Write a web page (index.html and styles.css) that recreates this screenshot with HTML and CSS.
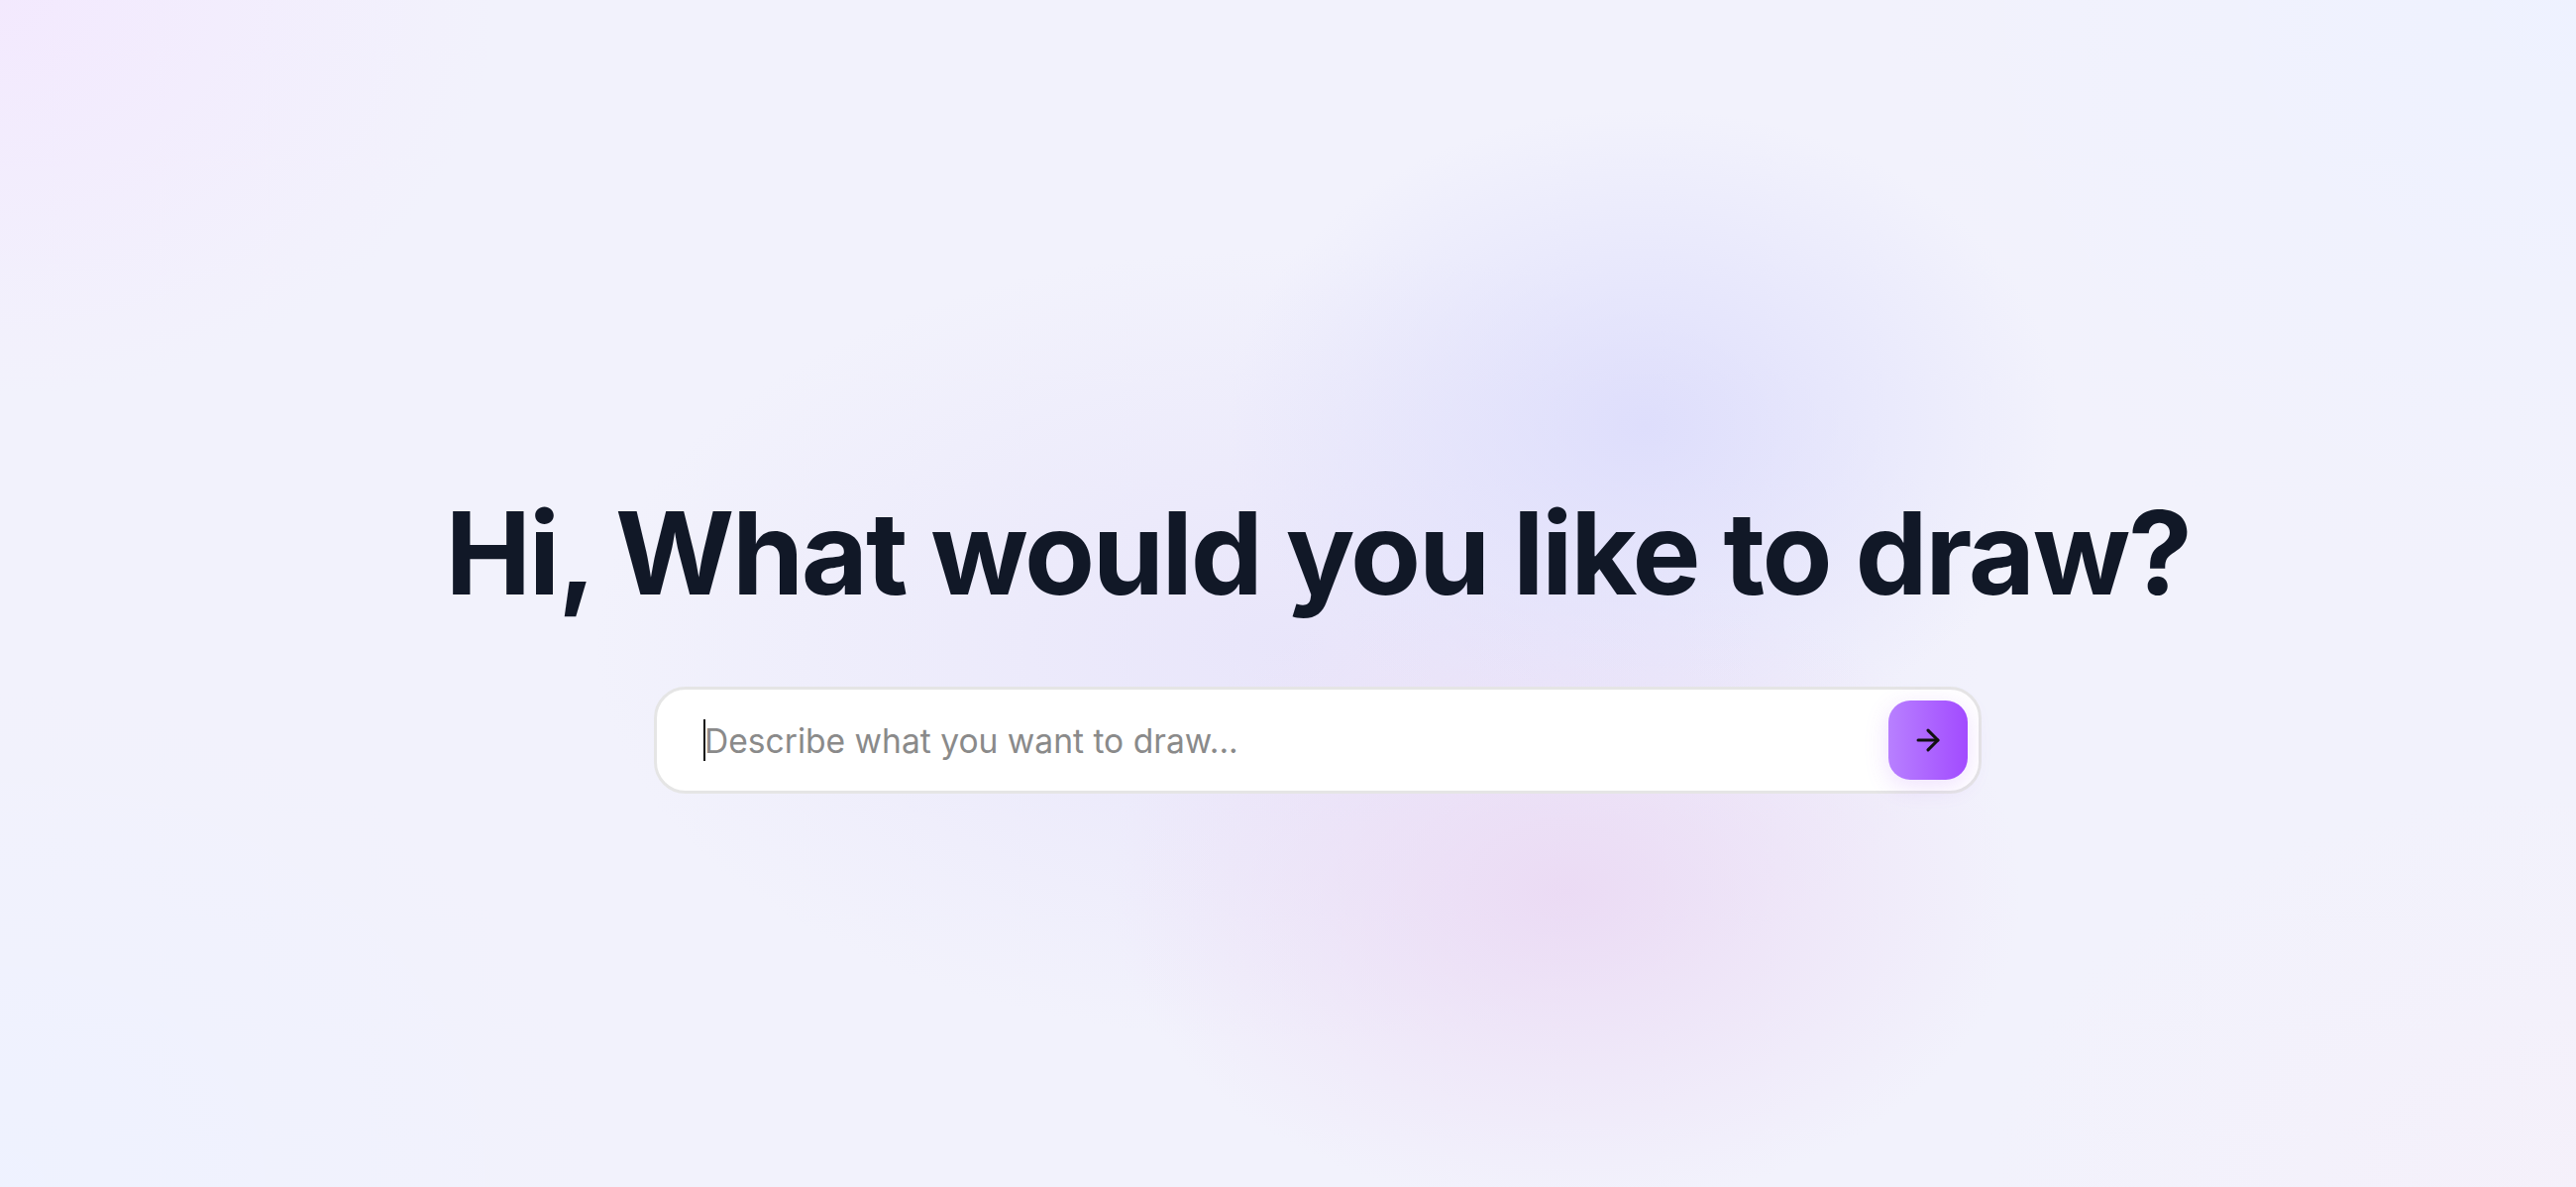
FILE: index.html
```html
<!DOCTYPE html>
<html lang="en">
<head>
<meta charset="utf-8">
<title>Draw</title>
<link rel="stylesheet" href="styles.css">
</head>
<body>
<main class="page">
  <h1 class="title">Hi, What would you like to draw?</h1>
  <form class="prompt">
    <div class="field">
      <span class="caret"></span>
      <input class="input" type="text" placeholder="Describe what you want to draw...">
    </div>
    <button class="send" type="button" aria-label="Send">
      <svg viewBox="0 0 24 24" width="34" height="34" fill="none" stroke="#111111" stroke-width="2.2" stroke-linecap="round" stroke-linejoin="round"><path d="M5 12h14"/><path d="m12 5 7 7-7 7"/></svg>
    </button>
  </form>
</main>
</body>
</html>
```
FILE: styles.css
```css
* { box-sizing: border-box; }
html, body { margin: 0; height: 100%; }
body {
  font-family: Inter, "Noto Sans", sans-serif;
  background-color: #f2f2fc;
  background-image:
    radial-gradient(ellipse 420px 320px at 1660px 430px, rgba(220,220,252,0.9), rgba(220,220,252,0) 100%),
    radial-gradient(ellipse 460px 320px at 1580px 900px, rgba(235,218,244,0.95), rgba(235,218,244,0) 100%),
    radial-gradient(ellipse 700px 400px at 1300px 650px, rgba(230,226,250,0.8), rgba(230,226,250,0) 100%),
    radial-gradient(ellipse 500px 400px at 0px 0px, rgba(243,232,254,0.9), rgba(243,232,254,0) 100%),
    radial-gradient(ellipse 700px 600px at 2600px 0px, rgba(238,242,255,0.95), rgba(238,242,255,0) 100%),
    radial-gradient(ellipse 600px 500px at 0px 1198px, rgba(238,242,255,0.9), rgba(238,242,255,0) 100%),
    radial-gradient(ellipse 600px 400px at 2600px 1198px, rgba(245,240,250,0.9), rgba(245,240,250,0) 100%);
  overflow: hidden;
}
.page {
  height: 100%;
  display: flex;
  flex-direction: column;
  align-items: center;
  padding-top: 500px;
  padding-left: 60px;
}
.title {
  margin: 0;
  font-size: 116px;
  line-height: 1;
  font-weight: 700;
  letter-spacing: -0.02em;
  color: #111827;
  white-space: nowrap;
}
.prompt {
  margin-top: 77px;
  width: 1340px;
  height: 108px;
  background: #ffffff;
  border: 3px solid #e5e5e5;
  border-radius: 32px;
  display: flex;
  align-items: center;
  padding: 0 11px 0 45px;
}
.field {
  position: relative;
  flex: 1;
  display: flex;
  align-items: center;
}
.caret {
  position: absolute;
  left: 2px;
  top: 50%;
  width: 2px;
  height: 42px;
  margin-top: -21px;
  background: #111;
}
.input {
  flex: 1;
  border: 0;
  outline: none;
  background: transparent;
  font-family: Inter, "Noto Sans", sans-serif;
  font-size: 33.6px;
  color: #222;
  padding: 0 0 0 3px;
}
.input::placeholder { color: #8a8a8a; }
.send {
  width: 80px;
  height: 80px;
  border: 0;
  border-radius: 22px;
  background: linear-gradient(90deg, #b880ff 0%, #a24bff 100%);
  box-shadow: 0 6px 24px rgba(168, 85, 247, 0.18);
  display: flex;
  align-items: center;
  justify-content: center;
  padding: 0;
}
```
